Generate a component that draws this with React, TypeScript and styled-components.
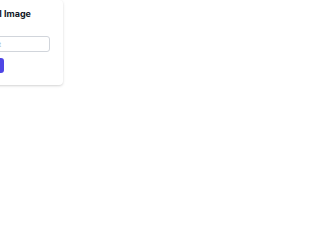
import React from "react";
import styled, { createGlobalStyle } from "styled-components";

const GlobalStyle = createGlobalStyle`
  html, body {
    margin: 0;
    padding: 0;
    background: #ffffff;
  }
  body {
    font-family: Inter, "Noto Sans", "Liberation Sans", sans-serif;
    overflow: hidden;
  }
`;

export default function App() {
  return (
    <>
      <GlobalStyle />
      <Page>
        <Card>
          <Title>Generate AI Image</Title>
          <PromptInput placeholder="Enter prompt" />
          <Button>Generate</Button>
        </Card>
      </Page>
    </>
  );
}

const Page = styled.div`
  width: 320px;
  height: 214px;
  display: flex;
  align-items: flex-start;
`;

const Card = styled.div`
  flex: none;
  width: 126px;
  margin-left: -63px;
  padding: 7px 13px 12px;
  box-sizing: border-box;
  background: #ffffff;
  border-radius: 4px;
  box-shadow: 0 1px 3px rgba(0, 0, 0, 0.12), 0 1px 2px rgba(0, 0, 0, 0.06);
  display: flex;
  flex-direction: column;
  align-items: flex-start;
`;

const Title = styled.h3`
  margin: 0 0 15px;
  font-size: 9px;
  line-height: 14px;
  font-weight: 700;
  color: #111827;
  white-space: nowrap;
`;

const PromptInput = styled.input`
  width: 100%;
  height: 16px;
  box-sizing: border-box;
  padding: 0 6px 0 7px;
  border: 1px solid #d1d5db;
  border-radius: 3px;
  font-family: inherit;
  font-size: 7px;
  color: #374151;
  outline: none;
  &::placeholder {
    color: #9ca3af;
  }
`;

const Button = styled.button`
  margin-top: 6px;
  width: 54px;
  height: 15px;
  padding: 0;
  border: none;
  border-radius: 3px;
  background: #4f46e5;
  color: #ffffff;
  font-family: inherit;
  font-size: 8px;
  font-weight: 600;
`;
